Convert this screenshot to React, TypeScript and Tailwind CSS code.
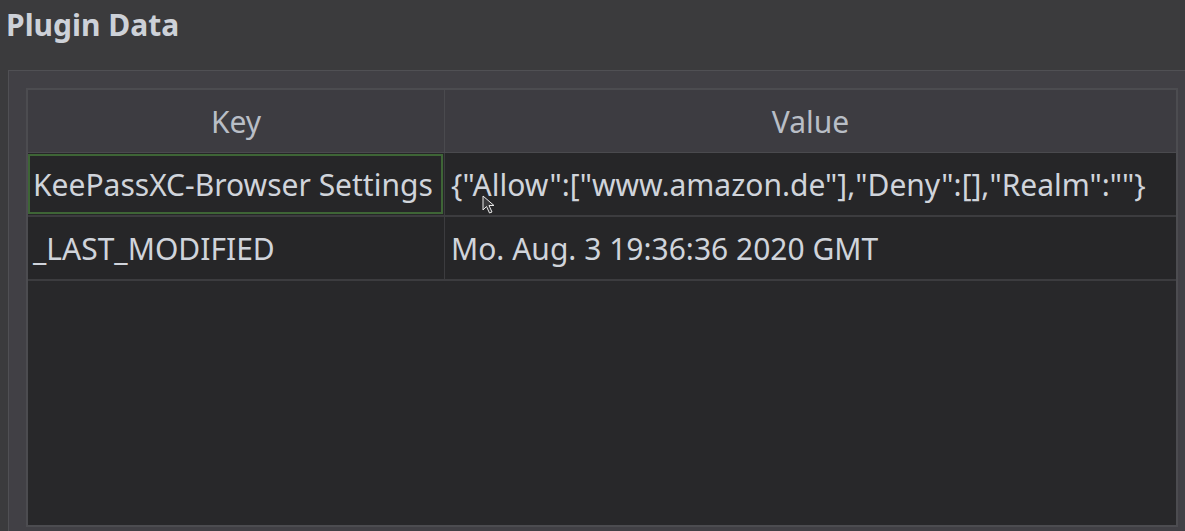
import React from 'react';

const font = { fontFamily: '"Noto Sans", "Open Sans", sans-serif' };

const rows = [
  { key: 'KeePassXC-Browser Settings', value: '{"Allow":["www.amazon.de"],"Deny":[],"Realm":""}', focused: true },
  { key: '_LAST_MODIFIED', value: 'Mo. Aug. 3 19:36:36 2020 GMT', focused: false },
];

const Cursor: React.FC = () => (
  <svg className="absolute left-[482px] top-[195px]" width="14" height="20" viewBox="0 0 14 20">
    <path d="M1 1 L1 15 L4.5 11.5 L7.5 18 L10 17 L7 10.5 L12 10.5 Z" fill="#3a3a3c" stroke="#e8e8e8" strokeWidth="1" strokeLinejoin="round" />
  </svg>
);

const App: React.FC = () => {
  return (
    <div className="relative h-[531px] w-[1185px] overflow-hidden bg-[#3b3b3d]" style={font}>
      <div className="pl-[6px] pt-[4px] h-[70px] text-[30px] font-bold leading-[42px] text-[#cdd1d8]">Plugin Data</div>

      <div className="ml-[8px] w-[1200px] h-[470px] border-l border-t border-[#505054] bg-[#414045] pl-[17px] pt-[17px]">
        <div className="w-[1152px] h-[439px] border-2 border-[#4c4c50] bg-[#28282a]">
          <div className="grid grid-cols-[417px_1fr] h-[63px] bg-[#3d3c41] border-b border-[#4a4a4e] text-[30px] text-[#b9bec6]">
            <div className="flex items-center justify-center border-r border-[#4a4a4e]">Key</div>
            <div className="flex items-center justify-center">Value</div>
          </div>

          {rows.map((row) => (
            <div key={row.key} className="grid grid-cols-[417px_1fr] h-[64px] border-b-2 border-[#3c3c3f] text-[30px] text-[#d0d4db] bg-[#262628]">
              <div className="border-r border-[#3c3c3f] pl-[0px] p-[1px]">
                <div className={`flex h-full items-center pl-[3px] whitespace-nowrap ${row.focused ? 'border-2 border-[#3e6536]' : 'border-2 border-transparent'}`}>
                  {row.key}
                </div>
              </div>
              <div className="flex items-center pl-[6px] whitespace-nowrap">{row.value}</div>
            </div>
          ))}
        </div>
      </div>

      <Cursor />
    </div>
  );
};

export default App;
